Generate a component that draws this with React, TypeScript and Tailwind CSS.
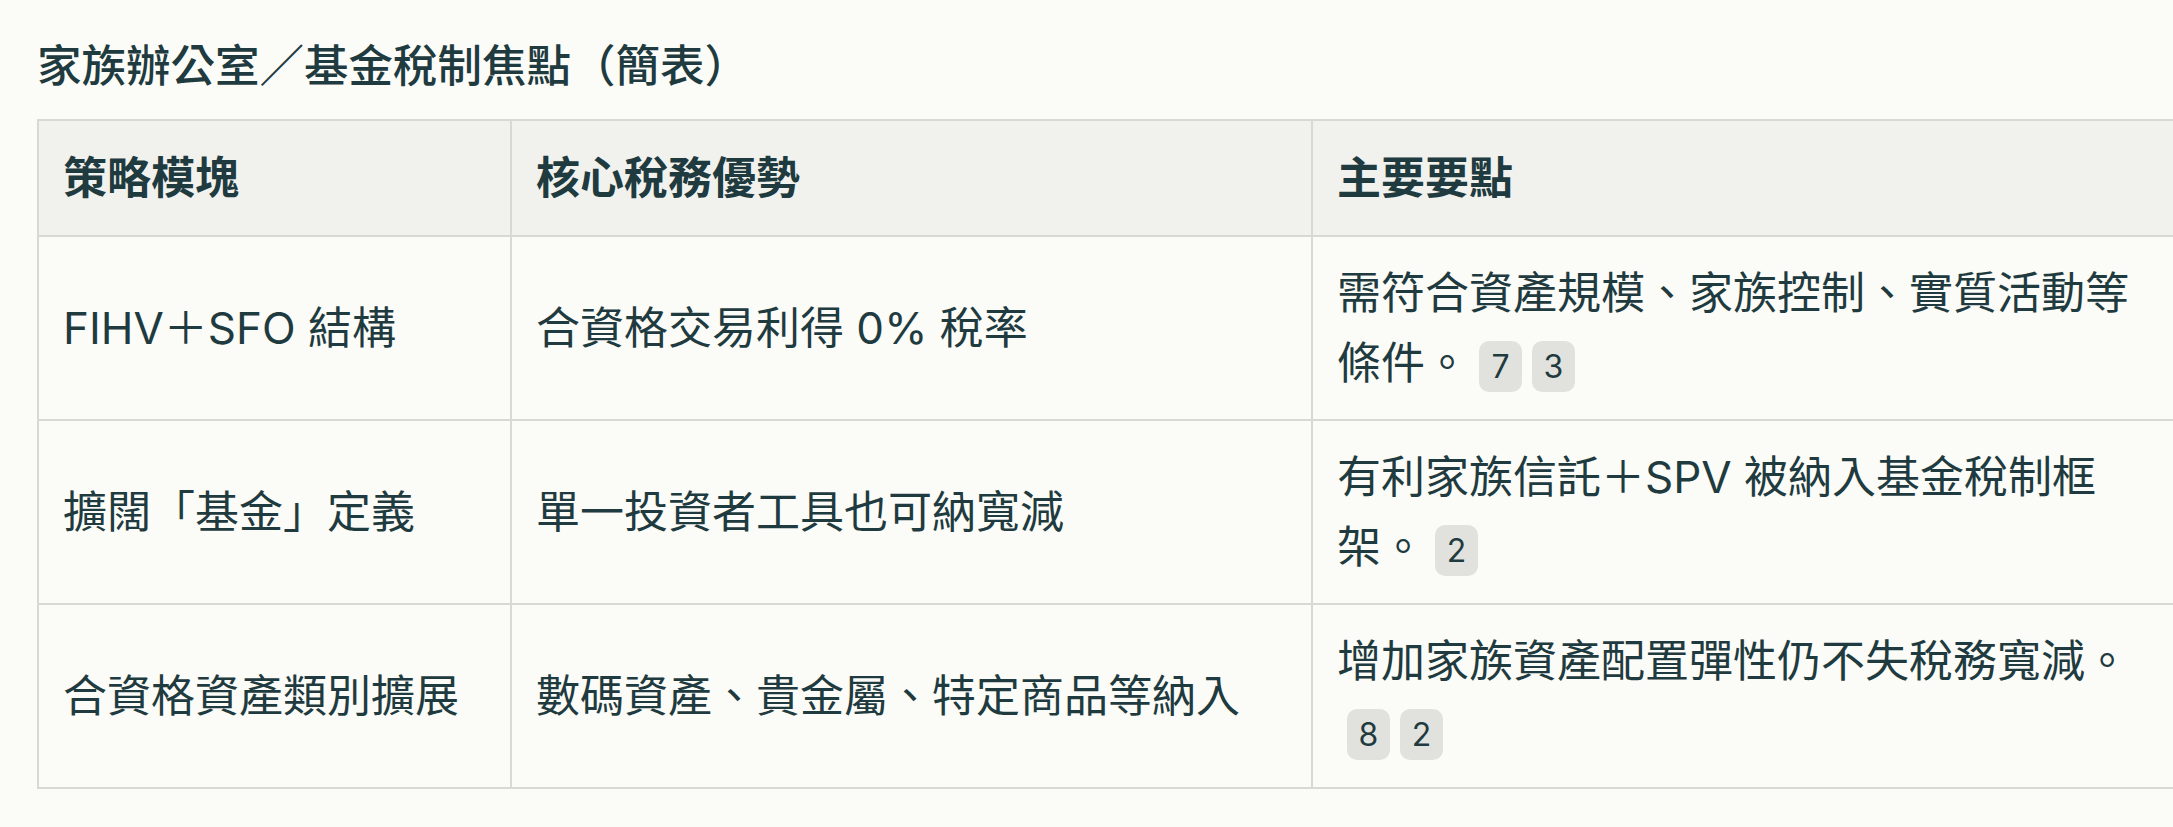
import React from 'react'

type Row = {
  module: string
  advantage: string
  point: string
  refs: number[]
}

const rows: Row[] = [
  {
    module: 'FIHV＋SFO 結構',
    advantage: '合資格交易利得 0% 稅率',
    point: '需符合資產規模、家族控制、實質活動等條件。',
    refs: [7, 3],
  },
  {
    module: '擴闊「基金」定義',
    advantage: '單一投資者工具也可納寬減',
    point: '有利家族信託＋SPV 被納入基金稅制框架。',
    refs: [2],
  },
  {
    module: '合資格資產類別擴展',
    advantage: '數碼資產、貴金屬、特定商品等納入',
    point: '增加家族資產配置彈性仍不失稅務寬減。',
    refs: [8, 2],
  },
]

function RefBadge({ n }: { n: number }) {
  return (
    <span className="ml-[10px] inline-flex h-[51px] min-w-[43px] items-center justify-center rounded-[10px] bg-[#e1e2dd] px-2 align-middle text-[32px] leading-none text-[#1f3b40]">
      {n}
    </span>
  )
}

export default function App() {
  return (
    <div
      className="min-h-screen w-full overflow-x-hidden bg-[#fbfcf8] pl-[37px] pt-[31px] text-[#1f3b40]"
      style={{ fontFamily: 'Inter, "Noto Sans CJK TC", "Noto Sans CJK SC", sans-serif' }}
    >
      <h2 className="mb-[18px] text-[44.5px] font-medium leading-[70px]">家族辦公室／基金稅制焦點（簡表）</h2>

      <table className="w-[2140px] table-fixed border-collapse text-[44px] leading-[70px]">
        <colgroup>
          <col className="w-[473px]" />
          <col className="w-[801px]" />
          <col className="w-[866px]" />
        </colgroup>
        <thead>
          <tr className="bg-[#f1f2ee]">
            <th className="border-2 border-[#d9d9d3] px-[24px] py-[22px] text-left font-bold">策略模塊</th>
            <th className="border-2 border-[#d9d9d3] px-[24px] py-[22px] text-left font-bold">核心稅務優勢</th>
            <th className="border-2 border-[#d9d9d3] px-[24px] py-[22px] text-left font-bold">主要要點</th>
          </tr>
        </thead>
        <tbody>
          {rows.map((r) => (
            <tr key={r.module}>
              <td className="border-2 border-[#d9d9d3] px-[24px] py-[21px] align-middle">{r.module}</td>
              <td className="border-2 border-[#d9d9d3] px-[24px] py-[21px] align-middle">{r.advantage}</td>
              <td className="border-2 border-[#d9d9d3] px-[24px] py-[21px] align-middle">
                {r.point}
                {r.refs.map((n, i) => (
                  <RefBadge key={i} n={n} />
                ))}
              </td>
            </tr>
          ))}
        </tbody>
      </table>
    </div>
  )
}
